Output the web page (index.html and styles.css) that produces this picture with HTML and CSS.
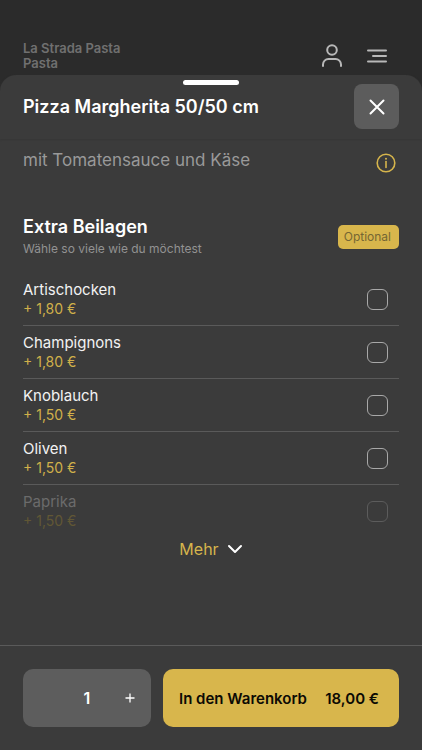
FILE: index.html
```html
<!DOCTYPE html>
<html lang="de">
<head>
<meta charset="utf-8">
<meta name="viewport" content="width=device-width, initial-scale=1">
<title>Pizza Margherita 50/50 cm</title>
<link rel="stylesheet" href="styles.css">
</head>
<body>
<header class="topbar">
  <div class="brand">La Strada Pasta<br>Pasta</div>
  <nav class="topnav">
    <button class="icon-button" type="button" aria-label="Konto">
      <svg width="24" height="26" viewBox="0 0 24 26" fill="none" stroke="currentColor" stroke-width="2" stroke-linecap="round"><circle cx="12" cy="7" r="4.800"/><path d="M3 23v-1.500a5.500 5.500 0 0 1 5.500-5.500h7a5.500 5.500 0 0 1 5.500 5.500V23"/></svg>
    </button>
    <button class="icon-button" type="button" aria-label="Menü">
      <svg width="22" height="26" viewBox="0 0 22 26" fill="none" stroke="currentColor" stroke-width="2" stroke-linecap="round"><path d="M2 7.500h18M7 13h13M2 18.500h18"/></svg>
    </button>
  </nav>
</header>
<main class="sheet">
  <div class="sheet-head">
    <span class="handle"></span>
    <h1 class="title">Pizza Margherita 50/50 cm</h1>
    <button class="close" type="button" aria-label="Schließen">
      <svg width="18" height="18" viewBox="0 0 18 18" fill="none" stroke="currentColor" stroke-width="2" stroke-linecap="round"><path d="M2.500 2.500l13 13M15.500 2.500l-13 13"/></svg>
    </button>
  </div>
  <div class="content">
    <div class="description">
      <p>mit Tomatensauce und Käse</p>
      <button class="info" type="button" aria-label="Information">
        <svg width="20" height="20" viewBox="0 0 20 20" fill="none" stroke="currentColor" stroke-width="1.600"><circle cx="10" cy="10" r="8.800"/><path d="M10 8.500v6" stroke-linecap="round"/><circle cx="10" cy="5.800" r="1" fill="currentColor" stroke="none"/></svg>
      </button>
    </div>
    <div class="group-head">
      <div>
        <h2>Extra Beilagen</h2>
        <p>Wähle so viele wie du möchtest</p>
      </div>
      <span class="badge">Optional</span>
    </div>
    <ul class="options">
      <li><label class="option"><span class="option-text"><span class="name">Artischocken</span><span class="price">+ 1,80 €</span></span><input type="checkbox"></label></li>
      <li><label class="option"><span class="option-text"><span class="name">Champignons</span><span class="price">+ 1,80 €</span></span><input type="checkbox"></label></li>
      <li><label class="option"><span class="option-text"><span class="name">Knoblauch</span><span class="price">+ 1,50 €</span></span><input type="checkbox"></label></li>
      <li><label class="option"><span class="option-text"><span class="name">Oliven</span><span class="price">+ 1,50 €</span></span><input type="checkbox"></label></li>
      <li><label class="option faded"><span class="option-text"><span class="name">Paprika</span><span class="price">+ 1,50 €</span></span><input type="checkbox"></label></li>
    </ul>
    <button class="more" type="button">Mehr
      <svg width="16" height="10" viewBox="0 0 16 10" fill="none" stroke="#fff" stroke-width="2" stroke-linecap="round" stroke-linejoin="round"><path d="M2 2l6 6 6-6"/></svg>
    </button>
  </div>
  <footer class="footer">
    <div class="stepper">
      <span class="count">1</span>
      <button class="plus" type="button" aria-label="Mehr hinzufügen">
        <svg width="10" height="10" viewBox="0 0 10 10" fill="none" stroke="currentColor" stroke-width="1.300"><path d="M5 .5v9M.5 5h9"/></svg>
      </button>
    </div>
    <button class="cart" type="button"><span>In den Warenkorb</span><span class="total">18,00 €</span></button>
  </footer>
</main>
</body>
</html>
```
FILE: styles.css
```css
* {
  box-sizing: border-box;
}

body {
  margin: 0;
  min-height: 100vh;
  display: flex;
  flex-direction: column;
  background: #2b2b2b;
  color: #fff;
  font-family: Inter, "Liberation Sans", sans-serif;
}

h1, h2, p, ul {
  margin: 0;
  padding: 0;
}

button {
  border: 0;
  padding: 0;
  background: none;
  color: inherit;
  font: inherit;
}

svg {
  display: block;
}

.topbar {
  display: flex;
  justify-content: space-between;
  align-items: flex-start;
  padding: 41px 34px 4px 23px;
}

.brand {
  font-size: 13px;
  font-weight: 600;
  line-height: 15px;
  color: #707070;
}

.topnav {
  display: flex;
  gap: 22px;
  padding-top: 2px;
  color: #b8b8b8;
}

.sheet {
  flex: 1;
  display: flex;
  flex-direction: column;
  background: #3b3b3b;
  border-radius: 16px 16px 0 0;
}

.sheet-head {
  position: relative;
  display: flex;
  justify-content: space-between;
  align-items: center;
  padding: 9px 23px 10px;
  box-shadow: 0 1px 2px #373737;
  border-radius: 16px 16px 0 0;
}

.handle {
  position: absolute;
  top: 5px;
  left: 50%;
  width: 56px;
  height: 5px;
  margin-left: -28px;
  border-radius: 3px;
  background: #fff;
}

.title {
  font-size: 18px;
  font-weight: 600;
  line-height: 24px;
}

.close {
  display: grid;
  place-items: center;
  width: 45px;
  height: 45px;
  border-radius: 8px;
  background: #5c5c5c;
}

.content {
  flex: 1;
  padding: 9px 23px 0;
}

.description {
  display: flex;
  justify-content: space-between;
  align-items: flex-start;
  padding-right: 3px;
  color: #999;
  font-size: 17px;
  line-height: 24px;
}

.info {
  padding-top: 5px;
  color: #d6b54c;
}

.group-head {
  display: flex;
  justify-content: space-between;
  align-items: center;
  margin-top: 42px;
}

.group-head h2 {
  font-size: 18px;
  font-weight: 600;
  line-height: 24px;
}

.group-head p {
  font-size: 12px;
  line-height: 20px;
  color: #929292;
}

.badge {
  padding: 0 8px 0 6px;
  border-radius: 5px;
  background: #d8b64c;
  color: #756633;
  font-size: 12px;
  line-height: 24px;
}

.options {
  margin-top: 14px;
  list-style: none;
}

.option {
  display: flex;
  justify-content: space-between;
  align-items: center;
  padding: 7px 11px 7px 0;
  border-bottom: 1px solid #5a5a5a;
}

.option-text {
  display: flex;
  flex-direction: column;
}

.name {
  font-size: 15px;
  line-height: 20px;
  color: #f2f2f2;
}

.price {
  font-size: 14px;
  line-height: 18px;
  color: #d0b04a;
}

.option input {
  appearance: none;
  width: 21px;
  height: 21px;
  margin: 0;
  border: 1px solid #a8a8a8;
  border-radius: 6px;
}

.option input:checked {
  background: #d8b64c;
}

.faded {
  border-bottom: 0;
}

.faded .name {
  color: #6b6b6b;
}

.faded .price {
  color: #615735;
}

.faded input {
  border-color: #5c5c5c;
}

.more {
  display: flex;
  align-items: center;
  gap: 8px;
  margin: 0 auto;
  color: #d6b54c;
  font-size: 16px;
  line-height: 24px;
}

.footer {
  display: grid;
  grid-template-columns: minmax(0, 128fr) minmax(0, 236fr);
  gap: 12px;
  padding: 23px;
  border-top: 1px solid #5a5a5a;
}

.stepper {
  display: grid;
  grid-template-columns: 1fr 1fr 1fr;
  align-items: center;
  height: 58px;
  border-radius: 10px;
  background: #5d5d5d;
}

.count {
  grid-column: 2;
  font-size: 16px;
  font-weight: 600;
  text-align: center;
}

.plus {
  justify-self: center;
}

.cart {
  display: flex;
  justify-content: space-between;
  align-items: center;
  padding: 0 20px 0 16px;
  border-radius: 10px;
  background: #d8b64c;
  color: #0c0a04;
  font-size: 15px;
  font-weight: 600;
}
```
